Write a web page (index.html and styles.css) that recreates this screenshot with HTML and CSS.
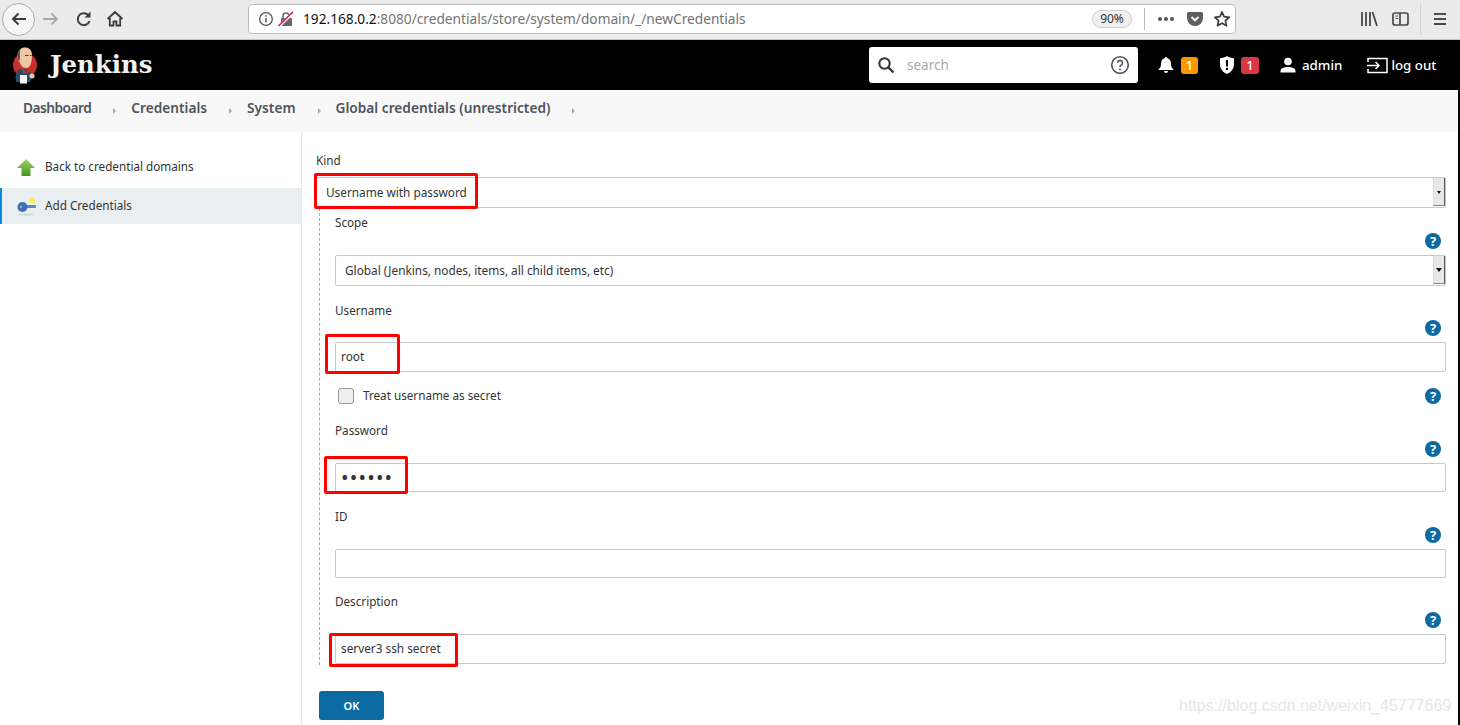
FILE: index.html
```html
<!doctype html>
<html>
<head>
<meta charset="UTF-8">
<title>Jenkins</title>
<link rel="stylesheet" href="styles.css">
</head>
<body>

<!-- browser toolbar -->
<div class="toolbar">
  <button class="nav-back"><svg width="18" height="18" viewBox="0 0 18 18"><path d="M16 9H3M8.500 3.500 3 9l5.500 5.500" fill="none" stroke="#3c3c3e" stroke-width="2"/></svg></button>
  <svg class="nav-icon nav-fwd" width="18" height="18" viewBox="0 0 18 18"><path d="M1 9h14M9.500 3.500 15 9l-5.500 5.500" fill="none" stroke="#a9a9aa" stroke-width="1.800"/></svg>
  <svg class="nav-icon nav-reload" width="18" height="18" viewBox="0 0 18 18"><path d="M14.500 11a6 6 0 1 1-.6-5" fill="none" stroke="#3c3c3e" stroke-width="2"/><path d="M15.500 1.500v6h-6z" fill="#3c3c3e"/></svg>
  <svg class="nav-icon nav-home" width="18" height="18" viewBox="0 0 18 18"><path d="M1.500 9 9 2l7.500 7M3.800 8v7.500h3.700v-4h3v4h3.700V8" fill="none" stroke="#3c3c3e" stroke-width="1.800"/></svg>
  <div class="urlbar">
    <svg class="url-info" width="16" height="16" viewBox="0 0 16 16"><circle cx="8" cy="8" r="6.300" fill="none" stroke="#555" stroke-width="1.300"/><path d="M8 7v4.500M8 4.300v1.500" stroke="#555" stroke-width="1.500"/></svg>
    <svg class="url-lock" width="16" height="16" viewBox="0 0 16 16"><path d="M5 7V5a3 3 0 0 1 6 0v2" fill="none" stroke="#666" stroke-width="1.600"/><rect x="3" y="7" width="11" height="8" rx="1" fill="#666"/><path d="M1 15.500 15.500 1" stroke="#fff" stroke-width="3"/><path d="M.5 15 15 .8" stroke="#e8104a" stroke-width="1.500"/></svg>
    <span class="url-text"><b>192.168.0.2</b>:8080/credentials/store/system/domain/_/newCredentials</span>
    <span class="url-zoom">90%</span>
    <span class="url-sep"></span>
    <span class="url-dots"><i></i><i></i><i></i></span>
    <svg class="url-pocket" width="18" height="16" viewBox="0 0 18 16"><path d="M2.500 1h13A1.500 1.500 0 0 1 17 2.500V7a8 8 0 0 1-16 0V2.500A1.500 1.500 0 0 1 2.500 1z" fill="#5e5e60"/><path d="M5.500 6 9 9.300 12.500 6" fill="none" stroke="#fff" stroke-width="2"/></svg>
    <svg class="url-star" width="18" height="18" viewBox="0 0 18 18"><path d="m9 2 2.100 4.700 5.100.6-3.800 3.400 1.100 5L9 13.200l-4.500 2.500 1.100-5L1.800 7.300l5.100-.6z" fill="none" stroke="#3c3c3e" stroke-width="1.700" stroke-linejoin="round"/></svg>
  </div>
  <svg class="tool-lib" width="18" height="16" viewBox="0 0 18 16"><path d="M2 1v14M6 1v14M10 1v14M12.500 1l4.500 14" stroke="#4a4a4c" stroke-width="1.800" fill="none"/></svg>
  <svg class="tool-side" width="18" height="16" viewBox="0 0 18 16"><rect x="1" y="2" width="15" height="12" rx="2" fill="none" stroke="#4a4a4c" stroke-width="1.700"/><path d="M8 2v12" stroke="#4a4a4c" stroke-width="1.700"/><path d="M3.500 5h2.500M3.500 7.500h2.500" stroke="#4a4a4c"/></svg>
  <span class="tool-sep"></span>
  <span class="tool-menu"><i></i><i></i><i></i></span>
</div>

<!-- jenkins header -->
<header class="page-head">
  <svg class="logo" width="26" height="38" viewBox="0 0 26 38">
    <circle cx="13" cy="19" r="12" fill="#c9302c"/>
    <path d="M4 36c-1-6 0-11 3-13l9 1c3 2 4 4 4 8l-2 4z" fill="#2b4a63"/>
    <path d="M5.500 9C6 4 9 1.500 13 1.500S20 4 20 9c0 6-1 13-6 13-3.500 0-5.500-3-6.300-6C6 15.500 5 12 5.500 9z" fill="#eec7a6"/>
    <path d="M5.500 9C6 6 7 4 8.500 3 7.500 6 8 9 8 11c0 1.500-.5 3-.5 4C6 14.500 5 11 5.500 9z" fill="#5c4a40"/>
    <path d="M13 9.500h3.500M18 9.500h1.500" stroke="#4a3a32"/>
    <path d="M11 24l3 2 3-2 .5 3-3.500-.5-3 1z" fill="#d33833"/>
    <path d="M8 29h7v8.500H8z" fill="#f4f4f4"/>
    <circle cx="20" cy="30" r="2.500" fill="#eec7a6"/>
  </svg>
  <span class="brand">Jenkins</span>
  <div class="search-box">
    <svg width="18" height="18" viewBox="0 0 18 18"><circle cx="7.500" cy="7.500" r="5.200" fill="none" stroke="#333" stroke-width="2"/><path d="m11.500 11.500 5 5" stroke="#333" stroke-width="2.400"/></svg>
    <input class="search-input" placeholder="search">
    <svg width="20" height="20" viewBox="0 0 20 20"><circle cx="10" cy="10" r="8.300" fill="none" stroke="#4d545d" stroke-width="1.600"/><path d="M7.500 7.800a2.500 2.500 0 1 1 3.800 2.200c-.9.500-1.300 1-1.300 2" fill="none" stroke="#4d545d" stroke-width="1.600"/><circle cx="10" cy="14.500" r="1" fill="#4d545d"/></svg>
  </div>
  <div class="head-item head-bell">
    <svg width="16" height="18" viewBox="0 0 16 18"><path d="M8 1a1.300 1.300 0 0 1 1.300 1.300C12 3 13 5 13 8c0 3 1 4 2.500 5.500v.5H.5v-.5C2 12 3 11 3 8c0-3 1-5 3.700-5.700A1.300 1.300 0 0 1 8 1z" fill="#fff"/><path d="M6 15h4a2 2 0 0 1-4 0z" fill="#fff"/></svg>
    <span class="badge badge-orange">1</span>
  </div>
  <div class="head-item head-shield">
    <svg width="16" height="20" viewBox="0 0 16 20"><path d="M8 1c2 1.500 4.500 2 7 2.200V9c0 5-3 8.500-7 10C4 17.500 1 14 1 9V3.200C3.500 3 6 2.500 8 1z" fill="#fff"/><path d="M8 5v6.500" stroke="#000" stroke-width="2"/><circle cx="8" cy="14" r="1.200"/></svg>
    <span class="badge badge-red">1</span>
  </div>
  <div class="head-item head-user">
    <svg width="16" height="16" viewBox="0 0 16 16"><circle cx="8" cy="4.500" r="3.800" fill="#fff"/><path d="M.5 15.500v-1.500c0-3 4-4 7.500-4s7.500 1 7.500 4v1.500z" fill="#fff"/></svg>
    <span>admin</span>
  </div>
  <div class="head-item head-logout">
    <svg width="21" height="17" viewBox="0 0 21 17"><path d="M1 5V1.500h19v14H1V12" fill="none" stroke="#fff" stroke-width="1.500"/><path d="M0 8.500h12M8.500 5l3.500 3.500L8.500 12" fill="none" stroke="#fff" stroke-width="1.500"/></svg>
    <span>log out</span>
  </div>
</header>

<ul class="crumbs">
  <li class="crumb-first">Dashboard</li>
  <li>Credentials</li>
  <li>System</li>
  <li>Global credentials (unrestricted)</li>
</ul>

<div class="page-body">
  <nav class="side">
    <a class="side-item">
      <svg width="18" height="17" viewBox="0 0 18 17"><defs><linearGradient id="upg" x1="0" y1="0" x2="0" y2="1"><stop offset="0" stop-color="#a5cf6b"/><stop offset="1" stop-color="#3f9a1d"/></linearGradient></defs><path d="M9 0 18 9h-4.500v8h-9V9H0z" fill="url(#upg)"/></svg>
      <span class="side-text">Back to credential domains</span>
    </a>
    <a class="side-item side-active">
      <svg width="20" height="19" viewBox="0 0 20 19"><circle cx="15" cy="3.500" r="3" fill="#f6ee5a"/><rect x="6" y="8" width="13" height="3" rx="1" fill="#5b86c1"/><circle cx="5.500" cy="10" r="5" fill="#3f6fb0"/><circle cx="4" cy="10" r="1.300" fill="#8fa9cf"/><ellipse cx="9" cy="17.500" rx="8" ry="1" fill="#d3d7da"/></svg>
      <span class="side-text">Add Credentials</span>
    </a>
  </nav>

  <main class="form">
    <label class="label">Kind</label>
    <div class="select-wrap select-kind">
      <select class="control select-control"><option>Username with password</option></select>
      <span class="select-arrow arrow-small"></span>
      <span class="mark mark-kind"></span>
    </div>

    <div class="sub">
      <div class="field">
        <label class="label">Scope</label>
        <span class="help">?</span>
        <div class="select-wrap">
          <select class="control select-control"><option>Global (Jenkins, nodes, items, all child items, etc)</option></select>
          <span class="select-arrow"></span>
        </div>
      </div>

      <div class="field field-user">
        <label class="label">Username</label>
        <span class="help">?</span>
        <div class="input-wrap">
          <input class="control" value="root">
          <span class="mark mark-user"></span>
        </div>
      </div>

      <div class="check-row">
        <input class="check" type="checkbox">
        <label class="check-label">Treat username as secret</label>
        <span class="help">?</span>
      </div>

      <div class="field">
        <label class="label">Password</label>
        <span class="help">?</span>
        <div class="input-wrap">
          <input class="control control-short control-pass" type="password" value="123456">
          <span class="mark mark-pass"></span>
        </div>
      </div>

      <div class="field field-id">
        <label class="label">ID</label>
        <span class="help">?</span>
        <div class="input-wrap">
          <input class="control control-short">
        </div>
      </div>

      <div class="field field-desc">
        <label class="label">Description</label>
        <span class="help">?</span>
        <div class="input-wrap">
          <input class="control" value="server3 ssh secret">
          <span class="mark mark-desc"></span>
        </div>
      </div>
    </div>

    <button class="ok">OK</button>
  </main>
</div>

<span class="watermark">https://blog.csdn.net/weixin_45777669</span>

</body>
</html>
```

FILE: styles.css
```css
* { box-sizing: border-box; }
html, body { height: 100%; }
body { margin: 0; overflow: hidden; background: #fff; color: #333; font: 11.700px/16px "Noto Sans", sans-serif; position: relative; }
svg { display: block; flex: none; }

/* browser toolbar */
.toolbar { height: 40px; padding-bottom: 1px; background: #ebebeb; border-bottom: 1px solid #c4c4c4; display: flex; align-items: center; position: relative; }
.nav-back { width: 33px; height: 33px; margin-left: 2px; padding: 0; border: 1px solid #aaa; border-radius: 50%; background: #f6f6f6; display: flex; align-items: center; justify-content: center; }
.nav-fwd { margin-left: 7px; }
.nav-reload { margin-left: 15px; }
.nav-home { margin-left: 13px; }
.urlbar { width: 988px; height: 30px; margin-left: 124px; background: #fff; border: 1px solid #bcbcbc; border-radius: 4px; display: flex; align-items: center; }
.url-info { margin-left: 9px; }
.url-lock { margin-left: 4px; }
.url-text { margin-left: 9px; width: 789px; font-size: 13.700px; color: #737373; white-space: nowrap; }
.url-text b { font-weight: 400; color: #111; }
.url-zoom { width: 40px; height: 18px; border: 1px solid #d0d0d0; border-radius: 9px; background: #f0f0f0; font-size: 12px; line-height: 16px; text-align: center; color: #333; }
.url-sep { width: 1px; height: 22px; margin-left: 12px; background: #bbb; }
.url-dots { margin-left: 13px; display: flex; gap: 2px; }
.url-dots i { width: 4px; height: 4px; border-radius: 50%; background: #555; }
.url-pocket { margin-left: 12px; }
.url-star { margin-left: 9px; }
.tool-lib { margin-left: 124px; }
.tool-side { margin-left: 14px; }
.tool-sep { width: 1px; height: 32px; margin-left: 10px; background: #d4d4d4; }
.tool-menu { margin-left: 13px; display: flex; flex-direction: column; gap: 3px; }
.tool-menu i { width: 12px; height: 2px; background: #4a4a4c; }

/* jenkins header */
.page-head { height: 50px; background: #000; color: #fff; display: flex; align-items: center; }
.logo { margin-left: 12px; }
.brand { margin-left: 12px; width: 819px; font: bold 24.400px/36px "DejaVu Serif", serif; color: #f2f2f2; }
.search-box { width: 269px; height: 36px; background: #fff; border-radius: 3px; display: flex; align-items: center; padding: 0 8px; }
.search-input { flex: 1; min-width: 0; margin-left: 12px; border: 0; outline: 0; padding: 0; font: 13.500px "Noto Sans", sans-serif; }
.search-input::placeholder { color: #aaa; }
.head-item { display: flex; align-items: center; font-size: 13.300px; font-weight: 500; }
.head-bell { margin-left: 20px; gap: 7px; }
.head-shield { margin-left: 21px; gap: 6px; }
.head-user { margin-left: 21px; gap: 6px; }
.head-logout { margin-left: 25px; gap: 3px; }
.badge { width: 17px; height: 17px; border-radius: 3px; font-size: 13px; line-height: 17px; text-align: center; color: #fff; }
.badge-orange { background: #ff9800; }
.badge-red { background: #dc3545; width: 18px; }

/* breadcrumb bar */
.crumbs { height: 42px; margin: 0; padding: 0 0 6px 23px; list-style: none; background: #f8f8f8; border-right: 2px solid #000; display: flex; align-items: center; font-size: 13.700px; font-weight: 600; color: #4d545d; }
.crumbs li { display: flex; align-items: center; }
.crumbs li::after { content: ""; width: 0; height: 0; margin: 5px 15px 0 22px; border-left: 3px solid #aaa; border-top: 3px solid transparent; border-bottom: 3px solid transparent; }
.crumbs .crumb-first { letter-spacing: -.5px; }

/* sidebar and form */
.page-body { display: flex; height: 593px; border-right: 2px solid #000; }
.side { width: 302px; flex: none; padding-top: 17px; border-right: 1px solid #e8e8e8; }
.side-item { height: 36px; margin-bottom: 3px; padding-left: 17px; display: flex; align-items: center; gap: 10px; color: #333; }
.side-text { margin-bottom: 2px; }
.side-active { background: #e9eef1; border-left: 2px solid #0b8ad8; padding-left: 15px; gap: 8px; }
.form { flex: 1; min-width: 0; padding: 20px 12px 0 14px; }
.label { display: block; height: 17px; line-height: 16px; }
.control { width: 100%; height: 30px; display: block; padding: 0 5px 2px; border: 1px solid #c8c8c8; border-radius: 2px; background: #fff; color: #333; font: 11.800px "Noto Sans", sans-serif; outline: 0; }
.control-short { height: 29px; }
.control-pass { padding: 0 4px 0 5px; font-size: 20px; letter-spacing: 1.200px; }
.select-control { height: 31px; appearance: none; padding-left: 9px; }
.select-wrap, .input-wrap { position: relative; }
.select-kind { margin-top: 8px; }
.select-arrow { position: absolute; top: 1px; right: 1px; width: 12px; height: 28px; background: #e8e8e8; border-left: 1px solid #ddd; border-right: 1px solid #555; border-bottom: 1px solid #888; }
.select-arrow::after { content: ""; position: absolute; top: 12px; left: 2px; border-top: 4px solid #111; border-left: 3px solid transparent; border-right: 3px solid transparent; }
.arrow-small::after { top: 13px; left: 3px; border-top-width: 3px; border-left-width: 2px; border-right-width: 2px; }
.sub { margin-left: 3px; padding: 6px 0 1px 15px; border-left: 1px dashed #aaa; }
.field { margin-bottom: 16px; }
.field-user .help { margin-top: 1px; }
.field-id { margin-bottom: 15px; }
.field-desc { margin-bottom: 0; }
.help { display: block; width: 16px; height: 16px; margin: 2px 5px 6px auto; border-radius: 50%; background: #0b6aa2; color: #fff; font-size: 13px; font-weight: 700; line-height: 16px; text-align: center; }
.check-row { height: 16px; margin-bottom: 18px; display: flex; align-items: center; }
.check { width: 16px; height: 16px; margin: 0 9px 0 3px; appearance: none; border: 1px solid #999; border-radius: 3px; background: #efefef; }
.check-label { margin-bottom: 2px; }
.check-row .help { margin: 0 5px 0 auto; }
.ok { display: block; width: 65px; height: 29px; margin: 26px 0 0 3px; padding: 0; border: 0; border-radius: 3px; background: #0b6aa2; color: #fff; font: 600 11px "Noto Sans", sans-serif; }

/* red annotation boxes drawn over the fields */
.mark { position: absolute; border: 3px solid #f00; border-radius: 2px; pointer-events: none; }
.mark-kind { top: -4px; left: -2px; width: 164px; height: 36px; }
.mark-user { top: -8px; left: -10px; width: 75px; height: 40px; }
.mark-pass { top: -7px; left: -11px; width: 84px; height: 38px; }
.mark-desc { top: -1px; left: -6px; width: 129px; height: 34px; }

.watermark { position: absolute; left: 1179px; top: 695px; font: 16px/22px "Liberation Sans", sans-serif; color: #e6e6e6; white-space: nowrap; }
```
